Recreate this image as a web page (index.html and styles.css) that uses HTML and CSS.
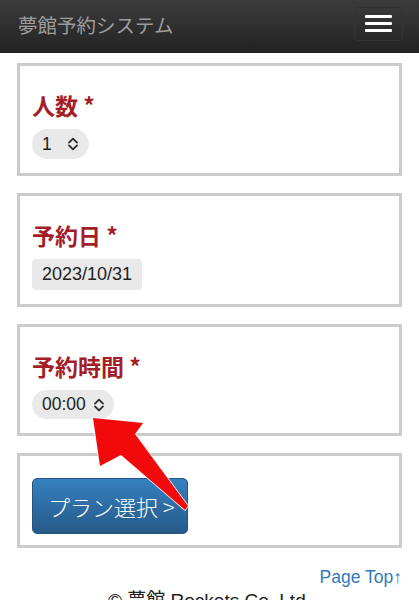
FILE: index.html
```html
<!DOCTYPE html>
<html lang="ja">
<head>
<meta charset="utf-8">
<title>夢館予約システム</title>
<link rel="stylesheet" href="styles.css">
</head>
<body>
<header class="navbar">
  <span class="brand">夢館予約システム</span>
  <button class="toggle" type="button" aria-label="menu">
    <span class="bar"></span><span class="bar"></span><span class="bar"></span>
  </button>
</header>
<main class="container">
  <section class="card">
    <div class="label">人数 <span class="req">*</span></div>
    <div class="control pill select-1">
      <span class="value">1</span>
      <svg class="chev" width="12" height="14" viewBox="0 0 12 14"><path d="M2 5.6 L6 1.6 L10 5.6 M2 8.4 L6 12.4 L10 8.4" fill="none" stroke="#2b2b2b" stroke-width="1.8" stroke-linecap="round" stroke-linejoin="round"/></svg>
    </div>
  </section>
  <section class="card">
    <div class="label">予約日 <span class="req">*</span></div>
    <div class="control date"><span class="value">2023/10/31</span></div>
  </section>
  <section class="card">
    <div class="label">予約時間 <span class="req">*</span></div>
    <div class="control pill time">
      <span class="value">00:00</span>
      <svg class="chev" width="12" height="14" viewBox="0 0 12 14"><path d="M2 5.6 L6 1.6 L10 5.6 M2 8.4 L6 12.4 L10 8.4" fill="none" stroke="#2b2b2b" stroke-width="1.8" stroke-linecap="round" stroke-linejoin="round"/></svg>
    </div>
  </section>
  <section class="card card-action">
    <button class="btn" type="button">プラン選択 &gt;</button>
  </section>
  <div class="bottom">
    <div class="pagetop"><a href="#">Page Top↑</a></div>
    <footer class="footer">© 夢館 Rockets Co. Ltd.</footer>
  </div>
</main>
<svg class="arrow" width="419" height="600" viewBox="0 0 419 600">
  <polygon points="93,418 143,423 135,434 188,506 185,510 121,455 100,466" fill="#f20a0a" stroke="#ffffff" stroke-width="1.5" stroke-linejoin="round" paint-order="stroke"/>
</svg>
</body>
</html>
```
FILE: styles.css
```css
html, body {
  margin: 0;
  padding: 0;
  background: #fff;
}
body {
  font-family: "Liberation Sans", "Noto Sans CJK JP", sans-serif;
  color: #222;
  position: relative;
}
.navbar {
  height: 53px;
  background: linear-gradient(to bottom, #3c3c3c 0%, #222 100%);
  display: flex;
  align-items: center;
  justify-content: space-between;
  padding: 0 16px 0 18px;
}
.brand {
  font-family: "Noto Sans CJK JP", sans-serif;
  font-size: 19.5px;
  color: #9d9d9d;
  line-height: 24px;
  margin-top: -4px;
}
.toggle {
  width: 49px;
  height: 34px;
  margin-top: -6px;
  background: transparent;
  border: 1px solid #333;
  border-radius: 4px;
  display: flex;
  flex-direction: column;
  align-items: center;
  justify-content: center;
  gap: 4.3px;
  padding: 0;
}
.bar {
  display: block;
  width: 27px;
  height: 3px;
  background: #fff;
  border-radius: 1px;
}
.container {
  padding: 10px 17px 0;
  display: flex;
  flex-direction: column;
  gap: 17px;
}
.card {
  border: 3px solid #cbcbcb;
  padding: 25px 12px 14px;
  display: flex;
  flex-direction: column;
  align-items: flex-start;
  gap: 10px;
}
.label {
  font-family: "Noto Sans CJK JP", sans-serif;
  font-weight: 700;
  font-size: 23px;
  line-height: 28px;
  height: 28px;
  color: #a41d27;
}
.control {
  background: #e9e9e9;
  height: 30px;
  display: flex;
  align-items: center;
  padding: 0 10px;
  font-size: 17.5px;
  color: #222;
  box-sizing: border-box;
}
.pill {
  border-radius: 15px;
}
.select-1 {
  gap: 15px;
}
.time {
  gap: 7px;
  height: 29px;
  padding-right: 9px;
}
.date {
  border-radius: 4px;
  height: 31px;
  font-size: 18px;
}
.chev {
  display: block;
}
.card-action {
  padding: 22px 12px 11px;
}
.btn {
  font-family: "Noto Sans CJK JP", sans-serif;
  font-size: 22px;
  font-weight: 300;
  color: #fff;
  height: 56px;
  padding: 0 12px 0 15px;
  background: linear-gradient(to bottom, #3580c0 0%, #265a88 100%);
  border: 1px solid #245580;
  border-radius: 5px;
  display: flex;
  align-items: center;
}
.bottom {
  display: flex;
  flex-direction: column;
}
.pagetop {
  text-align: right;
  font-size: 17.5px;
  line-height: 24px;
}
.pagetop a {
  color: #337ab7;
  text-decoration: none;
}
.footer {
  text-align: center;
  font-size: 19px;
  line-height: 24px;
  color: #222;
}
.arrow {
  position: absolute;
  left: 0;
  top: 0;
  pointer-events: none;
}
```
